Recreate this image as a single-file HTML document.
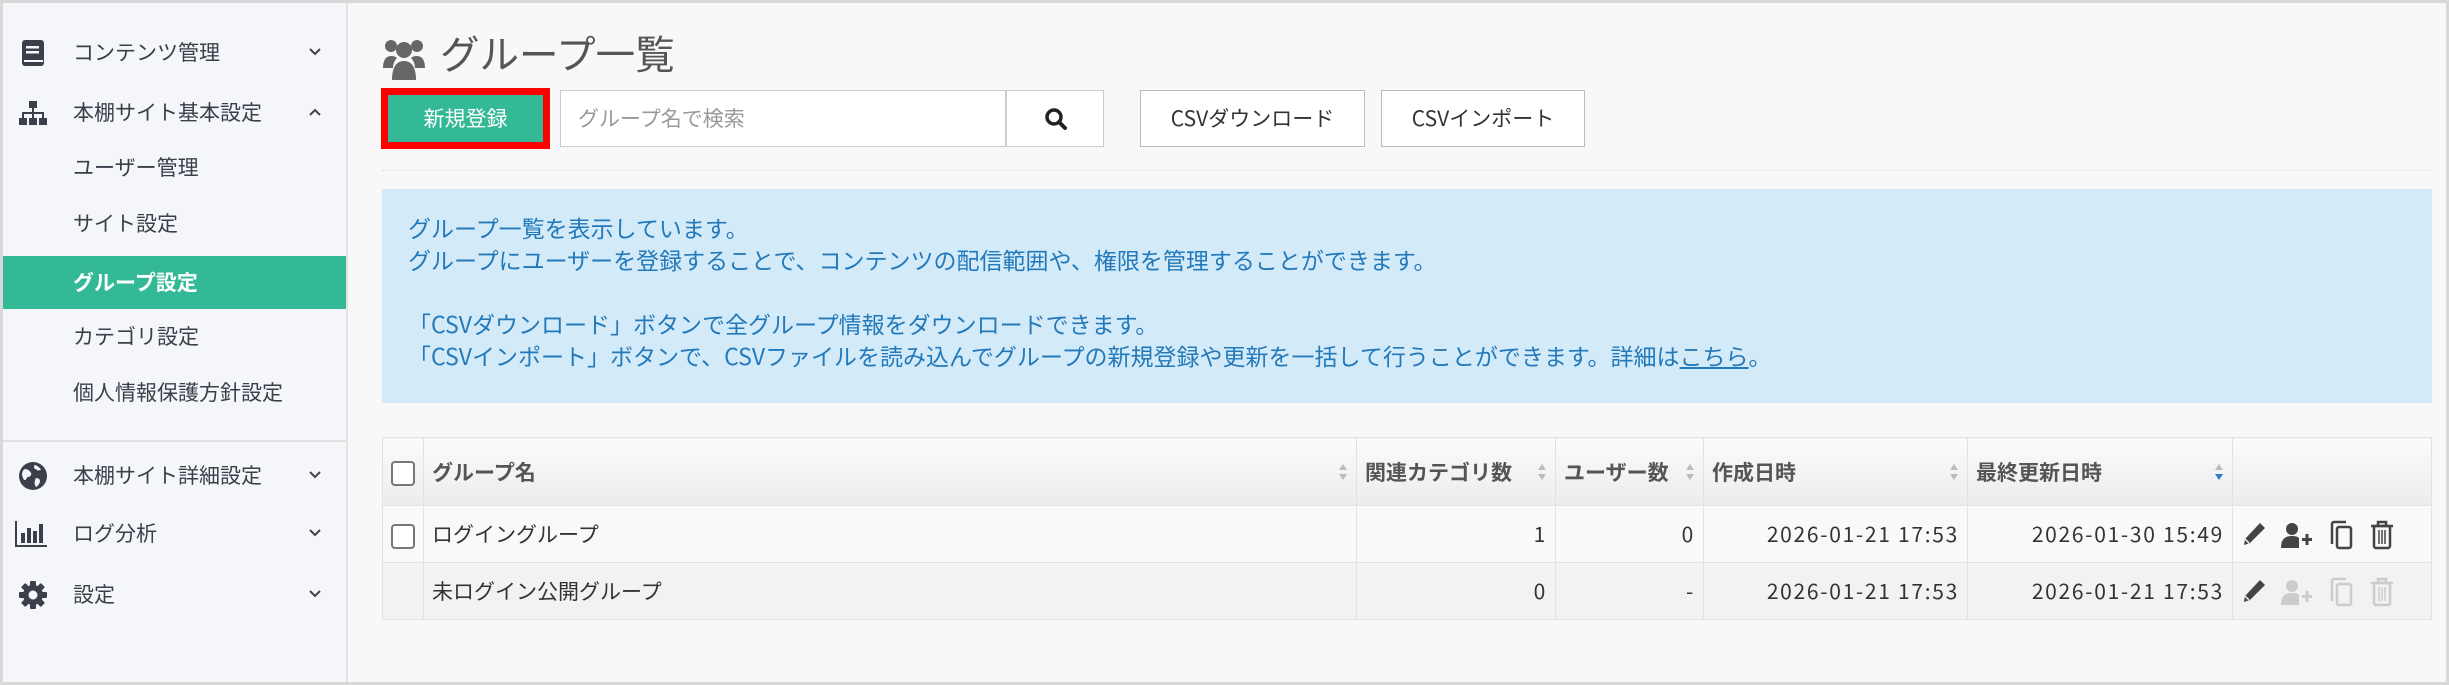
<!DOCTYPE html>
<html><head><meta charset="utf-8">
<style>
*{box-sizing:border-box;margin:0;padding:0}
body{width:2449px;height:685px;background:#f8f8f8;font-family:"Noto Sans CJK JP","Liberation Sans",sans-serif;color:#333;position:relative;overflow:hidden}
.frame{position:absolute;left:0;top:0;width:2449px;height:685px;border:3px solid #d8d8d8;pointer-events:none}
.side{position:absolute;left:0;top:0;width:348px;height:685px;background:#f4f6f9;border-right:2px solid #e3e3e3}
.si{position:absolute;left:0;width:346px;height:56px;font-size:21px;line-height:56px;color:#3a3f4a;padding-left:73px}
.si svg.ic{position:absolute;left:18px;top:14px}
.chev{position:absolute;left:308px;top:22px}
.act{background:#33b995;color:#fff;font-weight:bold}
.div{position:absolute;left:0;top:440px;width:346px;height:2px;background:#e0e0e0}
.abs{position:absolute}
.title{left:440px;top:28px;font-size:39.5px;color:#555;line-height:50px}
.btnnew{left:381px;top:88px;width:169px;height:61px;border:7px solid #f00;background:#33b995;color:#fff;font-size:21px;text-align:center;line-height:47px}
.inp{left:560px;top:90px;width:446px;height:57px;border:1px solid #ccc;background:#fff;color:#999;font-size:21px;line-height:55px;padding-left:17px}
.sbtn{left:1006px;top:90px;width:98px;height:57px;border:1px solid #ccc;background:#fff}
.btn{top:90px;height:57px;border:1px solid #bbb;background:#fff;font-size:21px;line-height:55px;text-align:center;color:#333}
.dot{left:382px;top:170px;width:2050px;border-top:1px dotted #ddd}
.info{left:382px;top:189px;width:2050px;height:214px;background:#d3eaf9;color:#2379b9;font-size:23px;padding:22px 0 0 26px;line-height:32px}
.info a{color:#2379b9;text-decoration:underline}
table{position:absolute;left:382px;top:437px;width:2050px;border-collapse:collapse;font-size:21px}
td,th{border:1px solid #e2e2e2;padding:0 8px}
th{height:68px;background:linear-gradient(#fbfbfb,#ececec);text-align:left;font-weight:bold;color:#555;position:relative;font-size:21px}
tr.r1 td{height:57px;background:#f9f9f9}
tr.r2 td{height:57px;background:#f2f2f2}
.num{text-align:right;letter-spacing:1.7px}
.cb{display:inline-block;width:24px;height:25px;border:2px solid #777;border-radius:4px;background:#fff;vertical-align:middle}
.sort{position:absolute;right:8px;top:24px;width:10px;height:20px}
.acts svg{margin-right:14px;vertical-align:middle}
</style></head><body>
<div class="side">
 <div class="si" style="top:24px"><svg class="ic" width="30" height="30" viewBox="0 0 30 30"><rect x="4" y="2" width="22" height="26" rx="3" fill="#3a3f4a"/><rect x="8" y="8" width="13" height="2.5" fill="#f4f6f9"/><rect x="8" y="13" width="13" height="2.5" fill="#f4f6f9"/><rect x="6" y="22" width="19" height="2" fill="#f4f6f9"/></svg>コンテンツ管理<svg class="chev" width="14" height="12" viewBox="0 0 14 12"><path d="M2 3l5 5 5-5" stroke="#444" stroke-width="2" fill="none"/></svg></div>
 <div class="si" style="top:84px"><svg class="ic" width="30" height="30" viewBox="0 0 30 30" fill="#3a3f4a"><rect x="11" y="3" width="8" height="7"/><rect x="14" y="10" width="2" height="5"/><rect x="4" y="14" width="22" height="2"/><rect x="4" y="14" width="2" height="6"/><rect x="24" y="14" width="2" height="6"/><rect x="14" y="14" width="2" height="6"/><rect x="1" y="20" width="8" height="7"/><rect x="11" y="20" width="8" height="7"/><rect x="21" y="20" width="8" height="7"/></svg>本棚サイト基本設定<svg class="chev" width="14" height="12" viewBox="0 0 14 12"><path d="M2 9l5-5 5 5" stroke="#444" stroke-width="2" fill="none"/></svg></div>
 <div class="si" style="top:139px">ユーザー管理</div>
 <div class="si" style="top:195px">サイト設定</div>
 <div class="si act" style="top:256px;height:53px;line-height:53px">グループ設定</div>
 <div class="si" style="top:308px">カテゴリ設定</div>
 <div class="si" style="top:364px">個人情報保護方針設定</div>
 <div class="div"></div>
 <div class="si" style="top:447px"><svg class="ic" width="30" height="30" viewBox="0 0 30 30"><circle cx="15" cy="15" r="14" fill="#3a3f4a"/><path d="M7 8c3 0 5 2 6 4s-1 4-3 4-1 3-3 3-2-3-3-5c0-3 1-5 3-6zM17 4c3 1 5 3 6 5-2 0-3 1-4 0s-3-1-3-3 1-2 1-2zM18 17c2 0 4 1 4 3s-2 5-4 6c-1-2-2-4-1-6 0-2 1-3 1-3z" fill="#f4f6f9"/></svg>本棚サイト詳細設定<svg class="chev" width="14" height="12" viewBox="0 0 14 12"><path d="M2 3l5 5 5-5" stroke="#444" stroke-width="2" fill="none"/></svg></div>
 <div class="si" style="top:505px"><svg class="ic" width="34" height="30" viewBox="0 0 34 30" style="left:14px"><rect x="1" y="2" width="2" height="26" fill="#3a3f4a"/><rect x="1" y="26" width="32" height="2" fill="#3a3f4a"/><rect x="7" y="14" width="4" height="10" fill="#3a3f4a"/><rect x="13" y="9" width="4" height="15" fill="#3a3f4a"/><rect x="19" y="12" width="4" height="12" fill="#3a3f4a"/><rect x="25" y="5" width="4" height="19" fill="#3a3f4a"/></svg>ログ分析<svg class="chev" width="14" height="12" viewBox="0 0 14 12"><path d="M2 3l5 5 5-5" stroke="#444" stroke-width="2" fill="none"/></svg></div>
 <div class="si" style="top:566px"><svg class="ic" width="30" height="30" viewBox="0 0 30 30"><g fill="#3a3f4a"><circle cx="15" cy="15" r="10"/><rect x="12" y="1" width="6" height="28" rx="1"/><rect x="1" y="12" width="28" height="6" rx="1"/><rect x="12" y="1" width="6" height="28" rx="1" transform="rotate(45 15 15)"/><rect x="12" y="1" width="6" height="28" rx="1" transform="rotate(-45 15 15)"/></g><circle cx="15" cy="15" r="4.5" fill="#f4f6f9"/></svg>設定<svg class="chev" width="14" height="12" viewBox="0 0 14 12"><path d="M2 3l5 5 5-5" stroke="#444" stroke-width="2" fill="none"/></svg></div>
</div>

<svg class="abs" style="left:382px;top:38px" width="44" height="42" viewBox="0 0 44 42" fill="#666"><circle cx="9" cy="8" r="6"/><circle cx="35" cy="8" r="6"/><circle cx="22" cy="12" r="8"/><path d="M1 30c0-8 3-12 8-12 3 0 5 1 6 2-3 3-4 7-4 10z"/><path d="M43 30c0-8-3-12-8-12-3 0-5 1-6 2 3 3 4 7 4 10z"/><path d="M10 42c0-12 4-19 12-19s12 7 12 19z"/></svg>
<div class="abs title">グループ一覧</div>
<div class="abs btnnew">新規登録</div>
<div class="abs inp">グループ名で検索</div>
<div class="abs sbtn"><svg style="position:absolute;left:37px;top:16px" width="24" height="24" viewBox="0 0 24 24"><circle cx="10" cy="10" r="7" stroke="#222" stroke-width="3.5" fill="none"/><path d="M15 15l6 6" stroke="#222" stroke-width="4" stroke-linecap="round"/></svg></div>
<div class="abs btn" style="left:1140px;width:225px">CSVダウンロード</div>
<div class="abs btn" style="left:1381px;width:204px">CSVインポート</div>
<div class="abs dot"></div>
<div class="abs info">グループ一覧を表示しています。<br>グループにユーザーを登録することで、コンテンツの配信範囲や、権限を管理することができます。<br><br>「CSVダウンロード」ボタンで全グループ情報をダウンロードできます。<br>「CSVインポート」ボタンで、CSVファイルを読み込んでグループの新規登録や更新を一括して行うことができます。詳細は<a>こちら</a>。</div>

<table>
<tr>
<th style="width:41px;padding:0 0 0 8px"><span class="cb"></span></th>
<th style="width:933px">グループ名<svg class="sort" viewBox="0 0 10 20"><path d="M5 2l4 6H1z M5 18l4-6H1z" fill="#bbb"/></svg></th>
<th style="width:199px">関連カテゴリ数<svg class="sort" viewBox="0 0 10 20"><path d="M5 2l4 6H1z M5 18l4-6H1z" fill="#bbb"/></svg></th>
<th style="width:148px">ユーザー数<svg class="sort" viewBox="0 0 10 20"><path d="M5 2l4 6H1z M5 18l4-6H1z" fill="#bbb"/></svg></th>
<th style="width:264px">作成日時<svg class="sort" viewBox="0 0 10 20"><path d="M5 2l4 6H1z M5 18l4-6H1z" fill="#bbb"/></svg></th>
<th style="width:265px">最終更新日時<svg class="sort" viewBox="0 0 10 20"><path d="M5 2l4 6H1z" fill="#bbb"/><path d="M5 18l4-6H1z" fill="#2b7fd0"/></svg></th>
<th></th>
</tr>
<tr class="r1">
<td style="padding:0 0 0 8px"><span class="cb"></span></td><td>ログイングループ</td><td class="num">1</td><td class="num">0</td><td class="num">2026-01-21 17:53</td><td class="num">2026-01-30 15:49</td>
<td class="acts"><svg width="26" height="28" viewBox="0 0 26 28"><path d="M19 2l5 5L9 22l-6 2 1-6z" fill="#444"/><path d="M4 18l4 4" stroke="#f9f9f9" stroke-width="1.5"/></svg><svg width="32" height="28" viewBox="0 0 32 28" fill="#444"><circle cx="11" cy="8" r="6"/><path d="M0 27c0-9 4-12 11-12 4 0 6 1 7 2v10z"/><rect x="21" y="17" width="10" height="3"/><rect x="24.5" y="13" width="3" height="11"/></svg><svg width="28" height="30" viewBox="0 0 28 30" fill="none" stroke="#444" stroke-width="2.5"><path d="M5 24V4a2 2 0 0 1 2-2h12"/><rect x="10" y="7" width="14" height="21" rx="2"/></svg><svg width="26" height="30" viewBox="0 0 26 30" fill="none" stroke="#444" stroke-width="2.5"><path d="M2 6h22M9 6V2h8v4"/><rect x="5" y="6" width="16" height="22" rx="2"/><path d="M10 10v14M13 10v14M16 10v14" stroke-width="1.5"/></svg></td>
</tr>
<tr class="r2">
<td></td><td>未ログイン公開グループ</td><td class="num">0</td><td class="num">-</td><td class="num">2026-01-21 17:53</td><td class="num">2026-01-21 17:53</td>
<td class="acts"><svg width="26" height="28" viewBox="0 0 26 28"><path d="M19 2l5 5L9 22l-6 2 1-6z" fill="#444"/><path d="M4 18l4 4" stroke="#f2f2f2" stroke-width="1.5"/></svg><svg width="32" height="28" viewBox="0 0 32 28" fill="#ccc"><circle cx="11" cy="8" r="6"/><path d="M0 27c0-9 4-12 11-12 4 0 6 1 7 2v10z"/><rect x="21" y="17" width="10" height="3"/><rect x="24.5" y="13" width="3" height="11"/></svg><svg width="28" height="30" viewBox="0 0 28 30" fill="none" stroke="#ccc" stroke-width="2.5"><path d="M5 24V4a2 2 0 0 1 2-2h12"/><rect x="10" y="7" width="14" height="21" rx="2"/></svg><svg width="26" height="30" viewBox="0 0 26 30" fill="none" stroke="#ccc" stroke-width="2.5"><path d="M2 6h22M9 6V2h8v4"/><rect x="5" y="6" width="16" height="22" rx="2"/><path d="M10 10v14M13 10v14M16 10v14" stroke-width="1.5"/></svg></td>
</tr>
</table>
<div class="frame"></div>
</body></html>
